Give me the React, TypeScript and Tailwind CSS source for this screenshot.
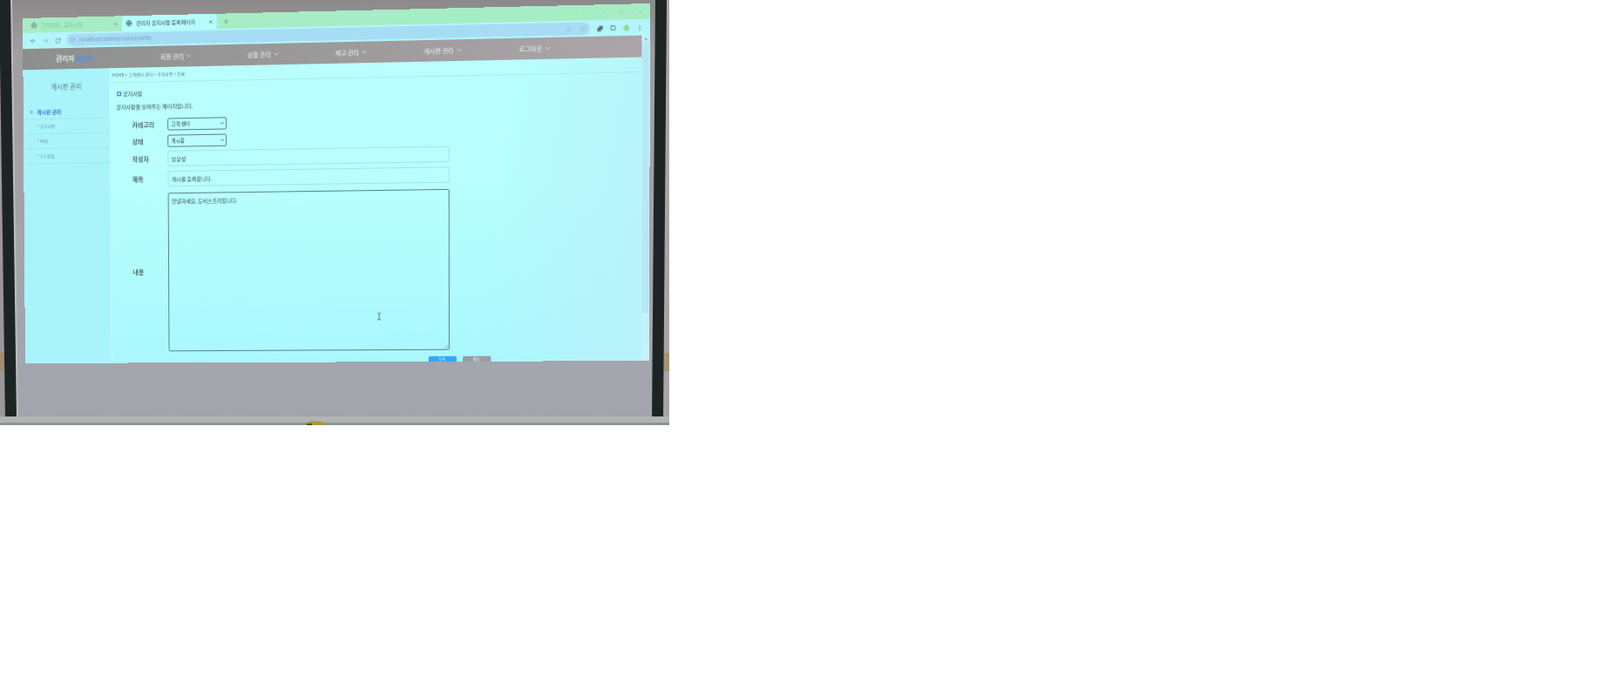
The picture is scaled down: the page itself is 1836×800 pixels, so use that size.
import { ArrowLeft, ArrowRight, ChevronDown, Globe, Info, Minus, MoreVertical, Plus, Puzzle, RotateCw, Share, Square, Star, TextCursor, User, X } from "lucide-react";

// the projected screen, as it sits in the photo
const SCREEN_W = 720;
const SCREEN_H = 396;
const QUAD = [[26, 21], [746, 4], [745, 414], [29, 417]];

function quadMatrix(w: number, h: number, q: number[][]) {
  const [[x0, y0], [x1, y1], [x2, y2], [x3, y3]] = q;
  const dx1 = x1 - x2, dx2 = x3 - x2, sx = x0 - x1 + x2 - x3;
  const dy1 = y1 - y2, dy2 = y3 - y2, sy = y0 - y1 + y2 - y3;
  const den = dx1 * dy2 - dx2 * dy1;
  const g = (sx * dy2 - dx2 * sy) / den;
  const k = (dx1 * sy - sx * dy1) / den;
  const a = x1 - x0 + g * x1, b = x3 - x0 + k * x3;
  const d = y1 - y0 + g * y1, e = y3 - y0 + k * y3;
  return `matrix3d(${a / w},${d / w},0,${g / w},${b / h},${e / h},0,${k / h},0,0,1,0,${x0},${y0},0,1)`;
}

const NAV_ITEMS = ["회원 관리", "상품 관리", "재고 관리", "게시판 관리", "로그아웃"];
const SIDE_ITEMS = ["공지사항", "FAQ", "1:1 상담"];

function Backdrop() {
  return (
    <svg className="absolute inset-0" width="768" height="488" viewBox="0 0 768 488">
      <defs>
        <linearGradient id="wall" x1="0" y1="0" x2="0" y2="1">
          <stop offset="0" stopColor="#8c898b" />
          <stop offset="0.12" stopColor="#a29e9f" />
          <stop offset="0.85" stopColor="#a3a6ae" />
          <stop offset="1" stopColor="#a1a4aa" />
        </linearGradient>
      </defs>
      <rect width="768" height="488" fill="url(#wall)" />
      <rect x="0" y="0" width="8" height="488" fill="#9b9797" />
      <rect x="0" y="405" width="6" height="21" fill="#a08d6c" />
      <rect x="760" y="0" width="8" height="488" fill="#a9a4a3" />
      <rect x="762" y="405" width="6" height="21" fill="#a8926f" />
      <polygon points="12,0 14,0 21,482 19,482" fill="#bcbfc0" />
      <polygon points="-1,0 12,0 19,482 6,482" fill="#1d2426" />
      <polygon points="752,0 765,0 761,485 748,485" fill="#1d2426" />
      <rect x="0" y="478" width="768" height="7" fill="#b1b4b3" />
      <rect x="0" y="485" width="768" height="3" fill="#8e9494" />
      <polygon points="352,488 354,484 361,483 374,485 374,488" fill="#a9993c" />
      <rect x="352" y="486" width="6" height="2" fill="#5c4a22" />
    </svg>
  );
}

function BrowserChrome() {
  return (
    <>
      <div className="flex h-[17px] items-stretch bg-[#a6ecc4]">
        <div className="flex w-[117px] items-center pl-[10px] pr-[4px] text-[#84c2a0]">
          <Globe size={7} strokeWidth={3} className="text-[#7b9c8e]" />
          <span className="ml-[5px] flex-1 text-[6px]">고객관리 - 공지사항</span>
          <X size={6} strokeWidth={3} className="text-[#79a08d]" />
        </div>
        <div className="flex w-[111px] items-center rounded-t-[4px] bg-[#b6fdfc] pl-[5px] pr-[4px] text-[#4c6973]">
          <Globe size={7} strokeWidth={3} className="text-[#4f6a74]" />
          <span className="ml-[5px] flex-1 text-[6px] font-medium">관리자 공지사항 등록페이지</span>
          <X size={6} strokeWidth={3} className="text-[#4f6a74]" />
        </div>
        <div className="ml-[7px] flex items-center text-[#6f9a8b]">
          <Plus size={8} strokeWidth={2.5} />
        </div>
        <div className="ml-auto flex items-center gap-[15px] pr-[8px] text-[#8ecfae]">
          <ChevronDown size={6} />
          <Minus size={6} />
          <Square size={5} />
          <X size={6} />
        </div>
      </div>
      <div className="flex h-[18px] items-center bg-[#b2f6fb] pl-[8px] pr-[8px] text-[#6a8f9a]">
        <ArrowLeft size={8} strokeWidth={2.5} />
        <ArrowRight size={8} strokeWidth={2.5} className="ml-[7px] text-[#8fb7c0]" />
        <RotateCw size={7} strokeWidth={2.5} className="ml-[7px]" />
        <div className="ml-[7px] flex h-[14px] flex-1 items-center rounded-full bg-[#a7dcf5] pl-[4px] pr-[5px]">
          <Info size={6} className="text-[#84aabd]" />
          <span className="ml-[5px] flex-1 text-[6.2px] text-[#7ba0b2]">localhost/admin/notice/write</span>
          <Share size={6} className="text-[#86b0c2]" />
          <Star size={6} className="ml-[9px] text-[#86b0c2]" />
        </div>
        <div className="ml-[8px] flex items-center gap-[8px]">
          <Puzzle size={7} fill="currentColor" className="text-[#4d6570]" />
          <Square size={6} strokeWidth={3} className="text-[#4d6570]" />
          <div className="flex h-[7px] w-[7px] items-center justify-center rounded-full bg-[#a4e6ad]">
            <User size={6} className="text-[#6aa878]" />
          </div>
          <MoreVertical size={7} strokeWidth={3} className="text-[#6b8f92]" />
        </div>
      </div>
    </>
  );
}

function TopNav() {
  return (
    <div className="flex h-[24px] shrink-0 items-center bg-gradient-to-r from-[#8d8f8f] to-[#aca5a8] pl-[39px] text-[#dfe9e8]">
      <div className="flex w-[123px] items-center gap-[2px]">
        <span className="text-[8px] font-bold">관리자</span>
        <span className="text-[7px] font-bold text-[#4f8ff2]">페이지</span>
      </div>
      <div className="flex items-center gap-[64px]">
        {NAV_ITEMS.map((item) => (
          <div key={item} className="flex items-center gap-[2px] text-[7px] font-medium">
            <span>{item}</span>
            <ChevronDown size={8} strokeWidth={2.5} />
          </div>
        ))}
      </div>
    </div>
  );
}

function Sidebar() {
  return (
    <aside className="w-[103px] shrink-0 border-r border-[#c4fafa] bg-[#a9f3fa]">
      <div className="flex h-[40px] items-center justify-center text-[7.5px] text-[#647c7f]">게시판 관리</div>
      <div className="flex h-[17px] items-center border-b border-[#9fe9ee] pl-[8px] text-[6px] font-bold text-[#4677d6]">
        <span className="h-[3px] w-[3px] border border-[#8aa9b0]" />
        <span className="ml-[5px]">게시판 관리</span>
      </div>
      {SIDE_ITEMS.map((item) => (
        <div key={item} className="flex h-[17px] items-center border-b border-[#9fe9ee] pl-[16px] text-[5px] text-[#76959a]">
          * {item}
        </div>
      ))}
    </aside>
  );
}

function FormRow({ label, children }: { label: string; children: React.ReactNode }) {
  return (
    <div className="flex items-center">
      <label className="w-[41px] shrink-0 text-[7px] font-bold text-[#56696c]">{label}</label>
      {children}
    </div>
  );
}

function FakeSelect({ value }: { value: string }) {
  return (
    <div className="relative h-[14px] w-[69px]">
      <select defaultValue={value} className="block h-full w-full appearance-none rounded-[2px] border border-[#5a8486] pl-[4px] text-[5.5px] font-medium text-[#3f5f62]">
        <option>{value}</option>
      </select>
      <ChevronDown size={6} strokeWidth={3.5} className="absolute right-[2px] top-[4px] text-[#3f5f62]" />
    </div>
  );
}

function NoticeForm() {
  return (
    <main className="relative flex-1 bg-[linear-gradient(100deg,transparent_70%,#b9f1fa),linear-gradient(180deg,#b8fffd_40%,#a9f8fe)]">
      <div className="flex h-[17px] items-center border-b border-[#a6efef] pl-[2px] text-[5px] text-[#5b7a81]">
        HOME &gt; 고객센터 관리 &gt; 공지사항 &gt; 등록
      </div>
      <div className="mt-[8px] flex items-center pl-[8px] text-[6.2px] font-medium text-[#4f6c72]">
        <span className="h-[5px] w-[5px] border border-[#2f7fd0] bg-[#a5e3f5]" />
        <span className="ml-[2px]">공지사항</span>
      </div>
      <p className="mt-[5.5px] pl-[7px] text-[6.2px] font-medium text-[#4f6c70]">공지사항을 보여주는 페이지입니다.</p>

      <div className="mt-[9px] pl-[25.6px]">
        <div className="flex w-[366px] flex-col">
          <FormRow label="카테고리"><FakeSelect value="고객 센터" /></FormRow>
          <div className="mt-[5px]">
            <FormRow label="상태"><FakeSelect value="게시중" /></FormRow>
          </div>
          <div className="mt-[4px]">
            <FormRow label="작성자">
              <input defaultValue="남궁성" className="h-[18px] flex-1 rounded-[2px] border border-[#a0e6e4] pl-[4px] text-[6px] font-medium text-[#4f6f71]" />
            </FormRow>
          </div>
          <div className="mt-[5px]">
            <FormRow label="제목">
              <input defaultValue="게시물 등록합니다." className="h-[18px] flex-1 rounded-[2px] border border-[#a0e6e4] pl-[4px] text-[6px] font-medium text-[#4f6f71]" />
            </FormRow>
          </div>
          <div className="mt-[7px]">
            <FormRow label="내용">
              <div className="relative flex-1">
                <textarea defaultValue="안녕하세요, 도비스프리입니다." className="block h-[181px] w-full resize-none rounded-[2px] border-[1.5px] border-[#5d8284] p-[4px] text-[6px] font-medium text-[#4a6a6c]" />
                <svg className="absolute bottom-[2px] right-[2px]" width="4" height="4" viewBox="0 0 4 4">
                  <path d="M0 4L4 0M2 4L4 2" stroke="#7a9a9c" strokeWidth="0.6" />
                </svg>
              </div>
            </FormRow>
          </div>
        </div>
        <div className="mt-[6.5px] flex gap-[7px] pl-[342px]">
          <button className="h-[8px] w-[32px] rounded-t-[2px] bg-[#38a4f4] text-[4.5px] leading-none text-[#d8efff]">등록</button>
          <button className="h-[8px] w-[32px] rounded-t-[2px] bg-[#9b9aa2] text-[4.5px] leading-none text-white">취소</button>
        </div>
      </div>
      <TextCursor size={9} strokeWidth={2} className="absolute left-[307px] top-[281px] text-[#46585c]" />
    </main>
  );
}

export default function App() {
  return (
    <div className="h-[800px] w-[1836px] overflow-hidden bg-white font-['Noto_Sans_CJK_KR','Noto_Sans',sans-serif]">
      <div className="relative h-[488px] w-[768px] overflow-hidden">
        <div className="absolute inset-0 blur-[0.65px]">
          <Backdrop />
          <div
            className="absolute left-0 top-0 flex h-[396px] w-[720px] origin-top-left flex-col overflow-hidden"
            style={{ transform: quadMatrix(SCREEN_W, SCREEN_H, QUAD) }}
          >
            <BrowserChrome />
            <div className="flex min-h-0 flex-1">
              <div className="flex min-w-0 flex-1 flex-col">
                <TopNav />
                <div className="flex min-h-0 flex-1 overflow-hidden">
                  <Sidebar />
                  <NoticeForm />
                </div>
              </div>
              <div className="flex w-[9px] shrink-0 flex-col items-center bg-[#c2f3fa] pt-[1px]">
                <span className="text-[4px] leading-[6px] text-[#7fb4c6]">▲</span>
                <div className="mt-[1px] h-[300px] w-[7px] bg-[#b5e7f5]" />
              </div>
            </div>
          </div>
        </div>
      </div>
    </div>
  );
}
